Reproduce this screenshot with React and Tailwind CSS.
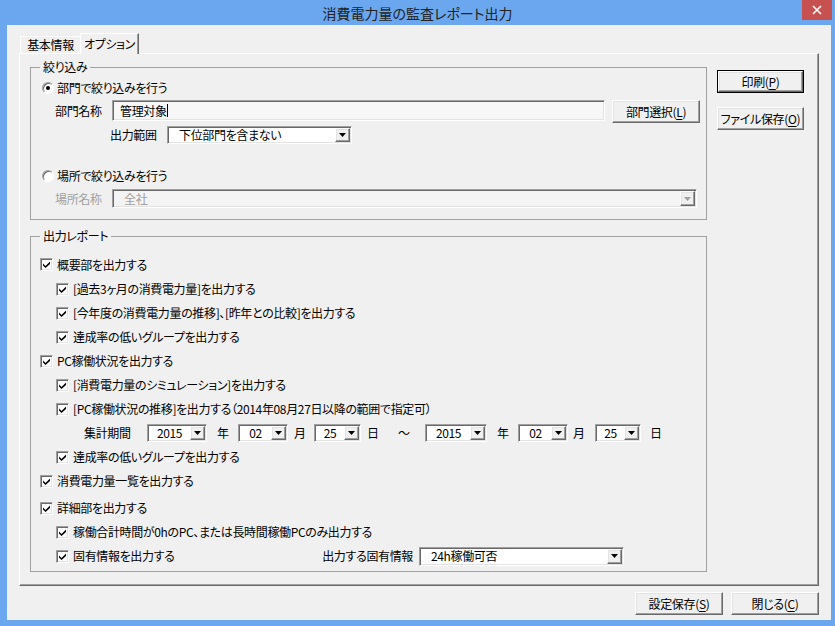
import React from "react";

// Win classic 3D edges
const raised =
  "border border-t-white border-l-white border-r-[#696969] border-b-[#696969] shadow-[inset_-1px_-1px_0_#a0a0a0,inset_1px_1px_0_#e3e3e3]";
const sunken =
  "border border-t-[#a0a0a0] border-l-[#a0a0a0] border-r-white border-b-white shadow-[inset_1px_1px_0_#696969,inset_-1px_-1px_0_#e3e3e3]";

const Arrow = ({ disabled }) => (
  <svg width="7" height="4" viewBox="0 0 7 4">
    <path d="M0 0H7L3.5 4Z" fill={disabled ? "#a0a0a0" : "#000"} />
  </svg>
);

const DropButton = ({ disabled }) => (
  <div className={`w-[15px] shrink-0 flex items-center justify-center bg-[#f0f0f0] ${raised}`}>
    <Arrow disabled={disabled} />
  </div>
);

const Select = ({ value, className = "", center = false }) => (
  <div className={`shrink-0 flex p-[1px] bg-white ${sunken} ${className}`}>
    <div
      className={`flex-1 flex items-center whitespace-nowrap ${
        center ? "justify-center" : "pl-[10px]"
      }`}
    >
      {value}
    </div>
    <DropButton />
  </div>
);

const Button = ({ text, mn, className = "" }) => (
  <div className={`shrink-0 flex items-center justify-center bg-[#f0f0f0] ${raised} ${className}`}>
    <span className="whitespace-nowrap">
      {text}(<span className="underline underline-offset-[2px]">{mn}</span>)
    </span>
  </div>
);

const CheckBox = () => (
  <div className={`w-[13px] h-[13px] shrink-0 bg-white flex items-center justify-center ${sunken}`}>
    <svg width="7" height="7" viewBox="0 0 7 7">
      <path d="M0 2.5L2.5 5L7 0.5V3L2.5 7L0 4.5Z" fill="#000" />
    </svg>
  </div>
);

const Radio = ({ checked }) => (
  <div className="w-[12px] h-[12px] shrink-0 rounded-full bg-white border border-t-[#a0a0a0] border-l-[#a0a0a0] border-r-white border-b-white shadow-[inset_1px_1px_0_#696969] flex items-center justify-center">
    {checked && <div className="w-[4px] h-[4px] rounded-full bg-black" />}
  </div>
);

const CheckRow = ({ sub, children, className = "h-[24px]" }) => (
  <div className={`flex items-center ${sub ? "pl-[25px]" : "pl-[9px]"} ${className}`}>
    <CheckBox />
    <span className="ml-[4px] whitespace-nowrap">{children}</span>
  </div>
);

export default function App() {
  return (
    <div className="w-[835px] h-[626px] bg-[#6aa7ee] flex flex-col text-[12px] leading-[14px] tracking-[-0.35px] text-black [font-family:'Noto_Sans_CJK_JP','Noto_Sans',sans-serif] [font-feature-settings:'palt']">
      {/* タイトルバー */}
      <div className="h-[25px] shrink-0 grid grid-cols-[33px_1fr_33px]">
        <div />
        <div className="flex items-center justify-center text-[14px] tracking-normal text-[#222]">
          消費電力量の監査レポート出力
        </div>
        <div className="flex">
          <div className="w-[30px] h-[20px] bg-[#c75050] flex items-center justify-center">
            <svg width="10" height="10" viewBox="0 0 10 10">
              <path d="M1 1L9 9M9 1L1 9" stroke="#fff" strokeWidth="1.6" />
            </svg>
          </div>
        </div>
      </div>

      {/* クライアント領域 */}
      <div className="ml-[7px] mr-[4px] mb-[6px] flex-1 bg-[#f0f0f0] flex flex-col">
        {/* タブ */}
        <div className="mt-[8px] ml-[13px] h-[20px] flex items-end">
          <div className="w-[60px] h-[17px] border-t border-l border-t-white border-l-white flex items-center justify-center">
            基本情報
          </div>
          <div className="relative z-10 -mb-px w-[59px] h-[21px] bg-[#f0f0f0] border-t border-l border-r border-t-white border-l-white border-r-[#696969] shadow-[inset_-1px_0_0_#a0a0a0] flex items-center justify-center">
            オプション
          </div>
        </div>

        {/* タブパネル */}
        <div className="ml-[12px] w-[800px] h-[533px] border border-t-white border-l-white border-r-[#696969] border-b-[#696969] shadow-[inset_-1px_-1px_0_#a0a0a0] flex">
          <div className="ml-[10px] w-[677px]">
            {/* 絞り込み */}
            <fieldset className="mt-[6px] border border-[#a0a0a0] pb-[11px]">
              <legend className="ml-[9px] px-[3px] leading-[14px]">絞り込み</legend>
              <div className="mt-[4px] h-[20px] pl-[11px] flex items-center">
                <Radio checked />
                <span className="ml-[3px]">部門で絞り込みを行う</span>
              </div>
              <div className="mt-[2px] pl-[24px] flex items-start">
                <span className="w-[48px] h-[21px] shrink-0 flex items-center">部門名称</span>
                <div className={`ml-[9px] w-[493px] h-[21px] pl-[7px] flex items-center bg-[#f7f7f7] ${sunken}`}>
                  管理対象
                  <span className="w-px h-[13px] bg-black" />
                </div>
                <Button className="ml-[7px] w-[88px] h-[23px]" text="部門選択" mn="L" />
              </div>
              <div className="mt-[3px] pl-[79px] flex items-center">
                <span className="w-[48px] shrink-0">出力範囲</span>
                <Select className="ml-[9px] w-[185px] h-[18px]" value="下位部門を含まない" />
              </div>
              <div className="mt-[22px] h-[20px] pl-[11px] flex items-center">
                <Radio />
                <span className="ml-[3px]">場所で絞り込みを行う</span>
              </div>
              <div className="mt-[3px] pl-[24px] flex items-center h-[19px]">
                <span className="w-[48px] shrink-0 text-[#a0a0a0]">場所名称</span>
                <div className={`ml-[9px] w-[585px] h-[19px] p-[1px] flex bg-[#f4f4f4] ${sunken}`}>
                  <div className="flex-1 pl-[10px] flex items-center text-[#a0a0a0]">全社</div>
                  <DropButton disabled />
                </div>
              </div>
            </fieldset>

            {/* 出力レポート */}
            <fieldset className="mt-[9px] border border-[#a0a0a0] pb-[3px]">
              <legend className="ml-[9px] px-[3px] leading-[14px]">出力レポート</legend>
              <div className="mt-[9px]" />
              <CheckRow className="h-[25px]">概要部を出力する</CheckRow>
              <CheckRow sub>[過去3ヶ月の消費電力量]を出力する</CheckRow>
              <CheckRow sub>[今年度の消費電力量の推移]、[昨年との比較]を出力する</CheckRow>
              <CheckRow sub>達成率の低いグループを出力する</CheckRow>
              <CheckRow>PC稼働状況を出力する</CheckRow>
              <CheckRow sub>[消費電力量のシミュレーション]を出力する</CheckRow>
              <CheckRow sub>[PC稼働状況の推移]を出力する（2014年08月27日以降の範囲で指定可）</CheckRow>
              <div className="h-[24px] pl-[53px] flex items-center">
                <span className="w-[48px] shrink-0">集計期間</span>
                <Select className="ml-[15px] w-[60px] h-[18px]" value="2015" center />
                <span className="ml-[10px] w-[12px] shrink-0">年</span>
                <Select className="ml-[9px] w-[50px] h-[18px]" value="02" center />
                <span className="ml-[6px] w-[12px] shrink-0">月</span>
                <Select className="ml-[8px] w-[47px] h-[18px]" value="25" center />
                <span className="ml-[6px] w-[12px] shrink-0">日</span>
                <span className="ml-[19px] w-[12px] shrink-0">～</span>
                <Select className="ml-[15px] w-[62px] h-[18px]" value="2015" center />
                <span className="ml-[10px] w-[12px] shrink-0">年</span>
                <Select className="ml-[9px] w-[50px] h-[18px]" value="02" center />
                <span className="ml-[5px] w-[12px] shrink-0">月</span>
                <Select className="ml-[10px] w-[46px] h-[18px]" value="25" center />
                <span className="ml-[9px] w-[12px] shrink-0">日</span>
              </div>
              <CheckRow sub>達成率の低いグループを出力する</CheckRow>
              <CheckRow>消費電力量一覧を出力する</CheckRow>
              <CheckRow className="mt-[3px] h-[24px]">詳細部を出力する</CheckRow>
              <CheckRow sub>稼働合計時間が0hのPC、または長時間稼働PCのみ出力する</CheckRow>
              <div className="h-[24px] pl-[25px] pr-[82px] flex items-center">
                <CheckBox />
                <span className="ml-[4px]">固有情報を出力する</span>
                <span className="ml-auto">出力する固有情報</span>
                <Select className="ml-[6px] w-[205px] h-[19px]" value="24h稼働可否" />
              </div>
            </fieldset>
          </div>

          {/* 右側ボタン */}
          <div className="ml-[10px] mt-[16px] w-[87px] flex flex-col">
            <div className="h-[23px] border border-black flex">
              <Button className="flex-1" text="印刷" mn="P" />
            </div>
            <Button className="mt-[14px] h-[23px]" text="ファイル保存" mn="O" />
          </div>
        </div>

        {/* 下部ボタン */}
        <div className="mt-[6px] mr-[12px] flex justify-end gap-[8px]">
          <Button className="w-[88px] h-[23px]" text="設定保存" mn="S" />
          <Button className="w-[88px] h-[23px]" text="閉じる" mn="C" />
        </div>
      </div>
    </div>
  );
}
